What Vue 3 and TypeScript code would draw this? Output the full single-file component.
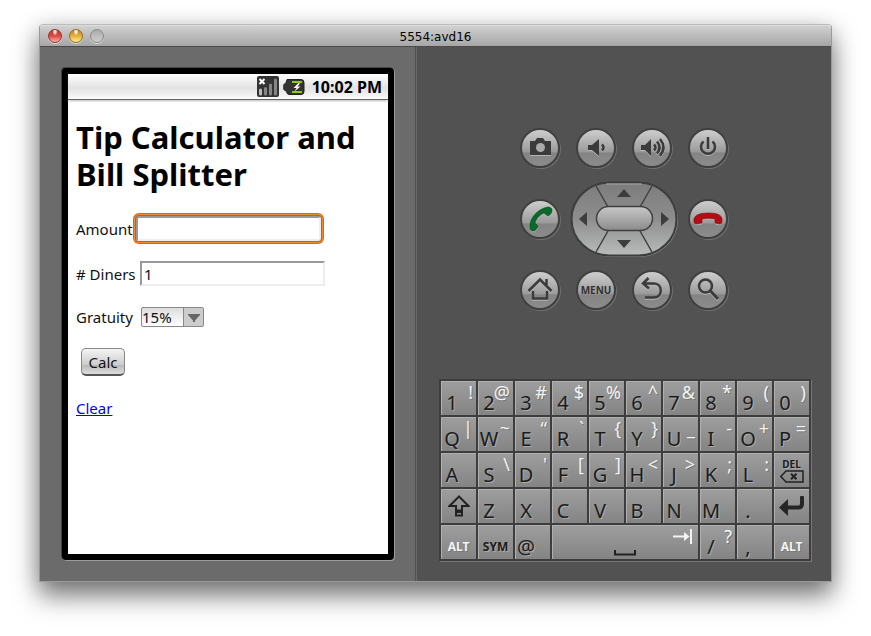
<script setup lang="ts">
import { ref } from 'vue'

interface Key {
  main: string
  alt?: string
  kind?: 'mod' | 'dark' | 'icon' | 'space'
}

const amount = ref('')
const diners = ref('1')
const gratuity = ref('15%')

const row = (main: string, alt: string): Key[] =>
  [...main].map((m, i) => ({ main: m, alt: (alt[i] ?? ' ').trim() }))

const keys: Key[] = [
  ...row('1234567890', '!@#$%^&*()'),
  ...row('QWERTYUIOP', '|~“`{}_-+='),
  ...row('ASDFGHJKL', " \\'[]<>;:"),
  { main: 'DEL', kind: 'icon' },
  { main: 'Shift', kind: 'icon' },
  ...row('ZXCVBNM.', ''),
  { main: 'Enter', kind: 'icon' },
  { main: 'ALT', kind: 'mod' },
  { main: 'SYM', kind: 'dark' },
  { main: '@' },
  { main: 'Space', kind: 'space' },
  { main: '/', alt: '?' },
  { main: ',' },
  { main: 'ALT', kind: 'mod' },
]

function clear() {
  amount.value = ''
  diners.value = '1'
  gratuity.value = '15%'
}
</script>

<template>
  <main class="window">
    <header class="titlebar">
      <div class="lights">
        <button class="light red" aria-label="Close"></button>
        <button class="light yellow" aria-label="Minimize"></button>
        <button class="light idle" aria-label="Zoom"></button>
      </div>
      <span class="title">5554:avd16</span>
    </header>

    <div class="panels">
      <section class="left">
        <div class="phone">
          <div class="status">
            <svg width="22" height="21" viewBox="0 0 22 21">
              <rect width="22" height="21" rx="2" fill="#333" />
              <path d="M2.5 3l5 5M7.5 3l-5 5" stroke="#fff" stroke-width="2" />
              <path d="M3.5 14v4" stroke="#bbb" stroke-width="3" stroke-linecap="round" />
              <path d="M8.5 12.500v5.500M13.500 9v9M18.500 4v14" stroke="#858585" stroke-width="3" stroke-linecap="round" />
            </svg>
            <svg class="battery" width="22" height="16" viewBox="0 0 22 16">
              <path d="M4 .5h14q3 0 3 3v9q0 3-3 3H6q-2 0-2.500-3L.8 10.500v-5L3 4z" fill="#333" stroke="#222" />
              <path d="M9 2h10v2H9zM9 12h10v2H9z" fill="#8ecb00" />
              <path d="M15.500 4l-5 5h3l-2 3.500 6-5h-3l2.500-3z" fill="#fff" />
            </svg>
            <span>10:02 PM</span>
          </div>
          <form class="page" @submit.prevent>
            <h1>Tip Calculator and Bill Splitter</h1>
            <div class="field focused">
              <label for="amount">Amount</label>
              <input id="amount" v-model="amount" type="text" />
            </div>
            <div class="field">
              <label for="diners"># Diners</label>
              <input id="diners" v-model="diners" type="text" />
            </div>
            <div class="field">
              <label for="gratuity">Gratuity</label>
              <span class="drop">
                <select id="gratuity" v-model="gratuity">
                  <option>10%</option>
                  <option>15%</option>
                  <option>20%</option>
                </select>
                <svg width="20" height="18" viewBox="0 0 20 18"><path d="M4 6h12v1l-5 5.500v1.500h-2v-1.500L4 7z" fill="#666" /></svg>
              </span>
            </div>
            <button class="calc" type="button">Calc</button>
            <a href="#" @click.prevent="clear">Clear</a>
          </form>
        </div>
      </section>

      <section class="right">
        <div class="controls">
          <button class="round" aria-label="Camera">
            <svg viewBox="0 0 40 40"><path d="M10 13h5l2-3h6l2 3h6v14H10z" fill="#3b3b3b" /><circle cx="20.500" cy="19.500" r="4.500" fill="#aaa" /></svg>
          </button>
          <button class="round" aria-label="Volume down">
            <svg viewBox="0 0 40 40"><path d="M12 17h4l7-6v17l-7-6h-4z" fill="#3b3b3b" /><path d="M26 16.500q3 3 0 6" class="line" /></svg>
          </button>
          <button class="round" aria-label="Volume up">
            <svg viewBox="0 0 40 40"><path d="M9 17h4l6-6v17l-6-6H9z" fill="#3b3b3b" /><path d="M22 16.500q3 3 0 6M25 13.500q5 6 0 12M28 11q7 8.500 0 17" class="line" /></svg>
          </button>
          <button class="round" aria-label="Power">
            <svg viewBox="0 0 40 40"><path d="M20 9v12M15.500 13.500a7 7 0 1 0 9 0" class="line" /></svg>
          </button>

          <button class="round" aria-label="Call">
            <svg viewBox="0 0 40 40"><path d="M10 29c-1-9 7-19 18-21 2 0 4 1 4 3 0 3-2 5-4 6l-4-3c-5 2-8 6-9 10l3 3c-1 3-3 5-5 5-2 0-3-1-3-3z" fill="#086b2a" stroke="#044719" stroke-width=".6" /></svg>
          </button>
          <div class="dpad">
            <svg class="ring" viewBox="0 0 108 76">
              <defs>
                <linearGradient id="ring" x1="0" y1="0" x2="0" y2="1"><stop stop-color="#7c7c7c" /><stop offset=".5" stop-color="#8e8e8e" /><stop offset="1" stop-color="#b8bcba" /></linearGradient>
                <linearGradient id="pill" x1="0" y1="0" x2="0" y2="1"><stop stop-color="#c8c8c8" /><stop offset="1" stop-color="#8b8b8b" /></linearGradient>
              </defs>
              <rect x="2.500" y="2.500" width="105" height="73" rx="38" ry="36.500" fill="none" stroke="#888" />
              <rect x="1.500" y="1.500" width="105" height="73" rx="38" ry="36.500" fill="url(#ring)" stroke="#3d3d3d" stroke-width="2" />
              <path d="M36 3h36" stroke="#a4a4a4" />
              <path d="M26 5L38 26M82 5L70 26M26 71L38 50M82 71L70 50" stroke="#404040" stroke-width="1.500" />
              <rect x="26.500" y="25.500" width="56" height="24" rx="12" fill="url(#pill)" stroke="#404040" stroke-width="1.500" />
            </svg>
            <button class="up" aria-label="Up"><svg width="14" height="8" viewBox="0 0 14 8"><path d="M0 8l7-8 7 8z" /></svg></button>
            <button class="lt" aria-label="Left"><svg width="8" height="14" viewBox="0 0 8 14"><path d="M8 0L0 7l8 7z" /></svg></button>
            <button class="ok" aria-label="Select"></button>
            <button class="rt" aria-label="Right"><svg width="8" height="14" viewBox="0 0 8 14"><path d="M0 0l8 7-8 7z" /></svg></button>
            <button class="dn" aria-label="Down"><svg width="14" height="8" viewBox="0 0 14 8"><path d="M0 0l7 8 7-8z" /></svg></button>
          </div>
          <button class="round" aria-label="End call">
            <svg viewBox="0 0 40 40"><path d="M6 23c-1-6 4-9 14.500-9S35 17 34 23c0 1-1 2-2 2l-5-1v-4c-4-1-9-1-13 0v4l-6 1c-1 0-2-1-2-2z" fill="#b50d13" stroke="#7c080c" stroke-width=".6" /></svg>
          </button>

          <button class="round" aria-label="Home">
            <svg viewBox="0 0 40 40"><path d="M8.500 21L20 9.500 31.500 21M26.500 15v-6M13 21v7.500h14V21" class="line" /></svg>
          </button>
          <button class="round menu">MENU</button>
          <button class="round" aria-label="Back">
            <svg viewBox="0 0 40 40"><path d="M16.500 8L11 13.500l6 5M12 13.500h10c9 0 9 14 0 14H13" class="line" /></svg>
          </button>
          <button class="round" aria-label="Search">
            <svg viewBox="0 0 40 40"><circle cx="17.500" cy="16" r="6.500" class="line" /><path d="M22 20.500l8 8.500" class="line bold" /></svg>
          </button>
        </div>

        <div class="keyboard">
          <button v-for="(k, i) in keys" :key="i" class="key" :class="k.kind" :aria-label="k.main">
            <template v-if="k.main === 'DEL'">
              <b class="del">DEL</b>
              <svg width="24" height="13" viewBox="0 0 24 13"><path d="M.8 6.500L6 1h17v11H6z" fill="none" stroke="#222" stroke-width="1.500" /><path d="M11 3.800l5.500 5.400M16.500 3.800L11 9.200" stroke="#222" stroke-width="2" /></svg>
            </template>
            <svg v-else-if="k.main === 'Shift'" width="22" height="24" viewBox="0 0 22 24"><path d="M11 2.500L1.500 12H8v4.500h6V12h6.500zM8 18h6v3.500H8z" fill="none" stroke="#222" stroke-width="2" /></svg>
            <svg v-else-if="k.main === 'Enter'" width="26" height="20" viewBox="0 0 26 20"><path d="M23 1.500V8q0 3.500-4 3.500H7" fill="none" stroke="#262626" stroke-width="4" stroke-linecap="round" /><path d="M0 11.500L9 3v17z" fill="#262626" /></svg>
            <template v-else-if="k.kind === 'space'">
              <svg class="tab" width="20" height="15" viewBox="0 0 20 15"><path d="M0 7.500h14M18 0v15" stroke="#f3f3f3" stroke-width="2" /><path d="M11 3l5.500 4.500L11 12z" fill="#f3f3f3" /></svg>
              <svg class="bar" width="22" height="7" viewBox="0 0 22 7"><path d="M1 0v4.500h20V0" fill="none" stroke="#222" stroke-width="2" /></svg>
            </template>
            <template v-else-if="k.kind">{{ k.main }}</template>
            <template v-else>
              <span class="main">{{ k.main }}</span>
              <span v-if="k.alt" class="alt">{{ k.alt }}</span>
            </template>
          </button>
        </div>
      </section>
    </div>
  </main>
</template>

<style>
body {
  margin: 0;
  background: #fff;
}
</style>

<style scoped>
* {
  box-sizing: border-box;
}
button {
  padding: 0;
  border: 0;
  background: none;
  font: inherit;
}
.window {
  margin: 24px 39px 54px;
  border: 1px solid #999;
  border-top-color: #bbb;
  border-radius: 4px 4px 0 0;
  font-family: 'Noto Sans', 'Open Sans', sans-serif;
  box-shadow: 0 14px 26px rgba(0, 0, 0, 0.5), 0 2px 22px rgba(0, 0, 0, 0.15);
}
.titlebar {
  display: grid;
  grid-template-columns: 1fr auto 1fr;
  align-items: center;
  height: 22px;
  padding: 0 8px;
  border-bottom: 1px solid #4b4b4b;
  border-radius: 3px 3px 0 0;
  background: linear-gradient(#d2d2d2, #a6a6a6);
  box-shadow: inset 0 1px #dedede;
}
.lights {
  display: flex;
  gap: 7px;
}
.light {
  width: 14px;
  height: 14px;
  border-radius: 50%;
  box-shadow: 0 1px #ddd;
}
.red {
  border: 1px solid #8d3833;
  background: radial-gradient(ellipse at 50% 10%, #ffe0dc 0 12%, transparent 30%), linear-gradient(#b8382f, #dd4a42 50%, #ffb0ac);
}
.yellow {
  border: 1px solid #93692c;
  background: radial-gradient(ellipse at 50% 10%, #fff6dd 0 12%, transparent 30%), linear-gradient(#c47a22, #e8b03c 50%, #fff08a);
}
.idle {
  border: 1px solid #8b8b8b;
  background: linear-gradient(#aaa, #cfcfcf);
}
.title {
  padding-top: 2px;
  font: 12px/20px 'DejaVu Sans', sans-serif;
  color: #000;
}
.panels {
  display: grid;
  grid-template-columns: 378fr 413fr;
}
.left {
  padding: 21px 21px 21px 22px;
  border-right: 3px double #505050;
  background: #6b6b6b;
}
.right {
  display: flex;
  flex-direction: column;
  align-items: center;
  gap: 54px;
  padding: 65px 20px 20px 21px;
  background: #525252;
}
.phone {
  display: flex;
  flex-direction: column;
  min-height: 492px;
  border: 6px solid #000;
  border-radius: 4px;
  background: #fff;
  background-clip: padding-box;
  box-shadow: 1px 1px #999, -1px -1px #444;
}
.status {
  display: flex;
  align-items: center;
  justify-content: flex-end;
  height: 26px;
  padding-right: 6px;
  border-bottom: 1px solid #6a6468;
  background: linear-gradient(#fff, #e2e2e2 55%, #fafafa);
  box-shadow: 0 2px 2px -1px #bbb;
  font: bold 16px/24px 'Noto Sans', sans-serif;
}
.battery {
  margin: 0 7px 0 4px;
}
.page {
  display: flex;
  flex-direction: column;
  align-items: flex-start;
  padding: 19px 8px;
  font-size: 15px;
  line-height: 22px;
  color: #111;
}
h1 {
  margin: 0 0 23px;
  font-size: 31px;
  line-height: 37px;
  color: #000;
}
.field {
  display: flex;
  align-items: center;
  margin-bottom: 20px;
}
.field label {
  width: 64px;
  white-space: nowrap;
}
.field input {
  width: 185px;
  height: 25px;
  padding: 0 2px;
  border: 2px solid;
  border-color: #999 #eee #eee #999;
  border-radius: 0;
  outline: none;
  background: #fff;
  font: inherit;
  color: #111;
}
.focused label {
  width: 60px;
}
.focused input {
  border-radius: 3px;
  box-shadow: 0 0 0 1px #c55f1a, 0 0 0 2px #f08a35, 0 0 0 3px #d36a1c;
}
.drop {
  display: grid;
  grid-template-columns: 43px 20px;
  margin-left: 1px;
}
.drop select {
  grid-area: 1 / 1 / 2 / 3;
  width: 63px;
  height: 20px;
  padding: 0 20px 0 0;
  border: 1px solid #888;
  border-radius: 2px;
  appearance: none;
  background: linear-gradient(90deg, transparent 41px, #888 41px 42px, #ccc 42px), linear-gradient(#ddd, #fff);
  font: inherit;
  line-height: 18px;
  color: #111;
}
.drop svg {
  grid-area: 1 / 2;
  align-self: center;
  pointer-events: none;
}
.calc {
  width: 44px;
  height: 28px;
  margin: 0 0 21px 5px;
  border: 1px solid #888;
  border-bottom: 2px solid #555;
  border-radius: 5px;
  background: linear-gradient(#f4f4f4, #ccc 65%, #bbb 66%, #ddd);
  color: #111;
}
.page a {
  color: #00e;
}
.controls {
  display: grid;
  grid-template-columns: repeat(4, 56px);
  grid-auto-rows: 71px;
  place-items: center;
  margin-left: -2px;
}
.round {
  display: grid;
  place-items: center;
  width: 40px;
  height: 40px;
  border: 2px solid #404040;
  border-radius: 50%;
  background: linear-gradient(#cecece, #9b9b9b 60%, #848484 64%, #8c8c8c);
  box-shadow: 1px 1px #707070;
  color: #333;
}
.round svg {
  width: 40px;
  height: 40px;
  margin: -2px;
  filter: drop-shadow(0 1px #b5b5b5);
}
.menu {
  font: bold 10px/12px 'Noto Sans', sans-serif;
}
.line {
  fill: none;
  stroke: #3b3b3b;
  stroke-width: 2.5;
}
.line.bold {
  stroke-width: 3;
}
.dpad {
  position: relative;
  grid-column: span 2;
  display: grid;
  grid-template: 25px 26px 25px / 26px 56px 26px;
  grid-template-areas: 'a up b' 'lt ok rt' 'c dn d';
}
.ring {
  position: absolute;
  inset: 0;
}
.dpad button {
  position: relative;
  display: grid;
  place-items: center;
}
.dpad button path {
  fill: #3d3d3d;
}
.up { grid-area: up; }
.lt { grid-area: lt; }
.ok { grid-area: ok; }
.rt { grid-area: rt; }
.dn { grid-area: dn; }
.keyboard {
  align-self: stretch;
  display: grid;
  grid-template-columns: repeat(10, 1fr);
  grid-auto-rows: 34px;
  gap: 2px;
  padding: 2px;
  background: #3d3d3d;
  box-shadow: 1px 1px #777;
}
.key {
  display: grid;
  grid-template-columns: 22px 1fr;
  min-width: 0;
  background: linear-gradient(#9e9e9e, #848484);
  box-shadow: inset 1px 1px #b0b0b0;
  color: #1c1c1c;
  text-shadow: 1px 1px #aaa;
}
.main {
  grid-area: 1 / 1;
  padding-top: 11px;
  font-size: 20px;
  line-height: 22px;
  text-align: center;
}
.alt {
  grid-area: 1 / 1 / 2 / 3;
  padding-right: 3px;
  font-size: 18px;
  line-height: 22px;
  text-align: right;
  color: #f3f3f3;
  text-shadow: 1px 1px #777;
}
.mod,
.dark {
  grid-template-columns: 1fr;
  padding-top: 12px;
  font: bold 12px/20px 'Noto Sans', sans-serif;
}
.mod {
  color: #f3f3f3;
  text-shadow: 1px 1px #777;
}
.icon {
  grid-template-columns: 1fr;
  place-items: center;
  align-content: center;
}
.del {
  font-size: 10px;
  line-height: 12px;
}
.space {
  grid-column: span 4;
  grid-template-columns: 1fr;
}
.tab {
  justify-self: end;
  margin: 4px 5px 0 0;
}
.bar {
  justify-self: center;
  margin-top: 4px;
}
</style>
